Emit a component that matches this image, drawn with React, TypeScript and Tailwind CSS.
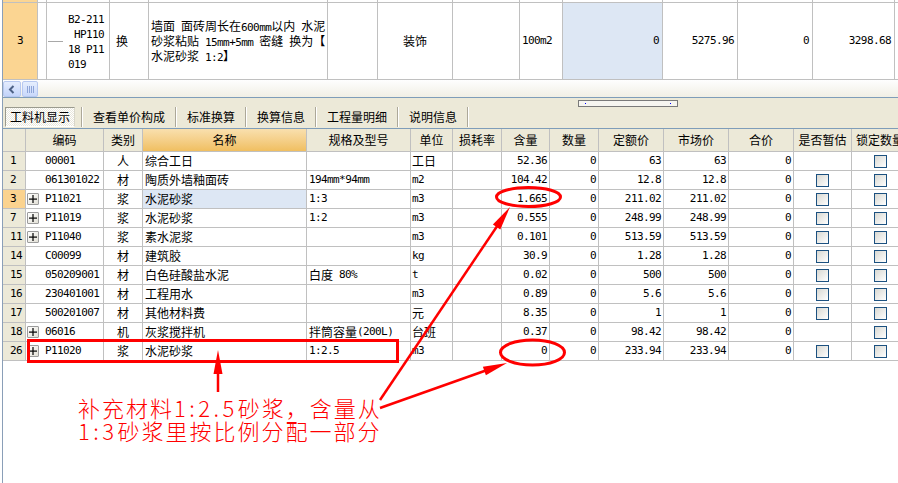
import React from "react";

const CJK = /([\u2E80-\u9FFF\u3000-\u303F\uFF00-\uFFEF]+)/;

function T({ s, big }: { s: string; big?: boolean }) {
  const parts = s.split(CJK).filter((p) => p !== "");
  return (
    <>
      {parts.map((p, i) =>
        CJK.test(p) ? (
          <span
            key={i}
            className={
              big
                ? "font-['Noto_Sans_CJK_SC',sans-serif] text-[22px] tracking-[2px] font-light"
                : "font-['Noto_Sans_CJK_SC',sans-serif] text-[12px]"
            }
          >
            {p}
          </span>
        ) : (
          <span
            key={i}
            className={
              big
                ? "font-['Noto_Sans_CJK_SC',sans-serif] text-[22px] tracking-[3.5px] font-light"
                : "font-['DejaVu_Sans_Mono',monospace] text-[11px] tracking-[-0.6px]"
            }
          >
            {p}
          </span>
        )
      )}
    </>
  );
}

const W = [
  "w-[23px]",
  "w-[78px]",
  "w-[39px]",
  "w-[164px]",
  "w-[104px]",
  "w-[42px]",
  "w-[49px]",
  "w-[48px]",
  "w-[49px]",
  "w-[65px]",
  "w-[65px]",
  "w-[65px]",
  "w-[58px]",
  "w-[57px]",
];

const HEAD = ["", "编码", "类别", "名称", "规格及型号", "单位", "损耗率", "含量", "数量", "定额价", "市场价", "合价", "是否暂估", "锁定数量"];

type R = {
  n: string;
  plus?: boolean;
  code: string;
  cat: string;
  name: string;
  spec: string;
  unit: string;
  qty: string;
  dp: string;
  est: boolean;
  sel?: boolean;
};

const ROWS: R[] = [
  { n: "1", code: "00001", cat: "人", name: "综合工日", spec: "", unit: "工日", qty: "52.36", dp: "63", est: false },
  { n: "2", code: "061301022", cat: "材", name: "陶质外墙釉面砖", spec: "194mm*94mm", unit: "m2", qty: "104.42", dp: "12.8", est: true },
  { n: "3", plus: true, code: "P11021", cat: "浆", name: "水泥砂浆", spec: "1:3", unit: "m3", qty: "1.665", dp: "211.02", est: true, sel: true },
  { n: "7", plus: true, code: "P11019", cat: "浆", name: "水泥砂浆", spec: "1:2", unit: "m3", qty: "0.555", dp: "248.99", est: true },
  { n: "11", plus: true, code: "P11040", cat: "浆", name: "素水泥浆", spec: "", unit: "m3", qty: "0.101", dp: "513.59", est: true },
  { n: "14", code: "C00099", cat: "材", name: "建筑胶", spec: "", unit: "kg", qty: "30.9", dp: "1.28", est: true },
  { n: "15", code: "050209001", cat: "材", name: "白色硅酸盐水泥", spec: "白度 80%", unit: "t", qty: "0.02", dp: "500", est: true },
  { n: "16", code: "230401001", cat: "材", name: "工程用水", spec: "", unit: "m3", qty: "0.89", dp: "5.6", est: true },
  { n: "17", code: "500201007", cat: "材", name: "其他材料费", spec: "", unit: "元", qty: "8.35", dp: "1", est: true },
  { n: "18", plus: true, code: "06016", cat: "机", name: "灰浆搅拌机", spec: "拌筒容量(200L)", unit: "台班", qty: "0.37", dp: "98.42", est: false },
  { n: "26", plus: true, code: "P11020", cat: "浆", name: "水泥砂浆", spec: "1:2.5", unit: "m3", qty: "0", dp: "233.94", est: true },
];

const cell = "shrink-0 h-full border-r border-[#c0c0c0] flex items-center overflow-hidden whitespace-pre";

function Check() {
  return <div className="w-[13px] h-[13px] border border-[#1c5180] bg-gradient-to-br from-[#d8d8d2] to-white" />;
}

function Plus() {
  return (
    <div className="ml-[1px] w-[12px] h-[12px] border border-[#9c9c9c] rounded-[1px] bg-gradient-to-br from-white to-[#e2e0d6] flex items-center justify-center">
      <svg width="8" height="8" viewBox="0 0 8 8">
        <rect x="0" y="3.5" width="8" height="1.2" fill="#000" />
        <rect x="3.4" y="0" width="1.2" height="8" fill="#000" />
      </svg>
    </div>
  );
}

function Row({ r }: { r: R }) {
  return (
    <div className="flex h-[19px] border-b border-[#c0c0c0] text-black">
      <div className={`${W[0]} ${cell} pl-[7px] ${r.sel ? "bg-[#fbd38f]" : "bg-[#ece9d8]"}`}>
        <T s={r.n} />
      </div>
      <div className={`${W[1]} ${cell}`}>
        <div className="w-[19px] shrink-0 flex items-center">{r.plus ? <Plus /> : null}</div>
        <T s={r.code} />
      </div>
      <div className={`${W[2]} ${cell} justify-center`}>
        <T s={r.cat} />
      </div>
      <div className={`${W[3]} ${cell} pl-[2px] ${r.sel ? "bg-[#dde7f4]" : ""}`}>
        <T s={r.name} />
      </div>
      <div className={`${W[4]} ${cell} pl-[2px]`}>
        <T s={r.spec} />
      </div>
      <div className={`${W[5]} ${cell} pl-[1px]`}>
        <T s={r.unit} />
      </div>
      <div className={`${W[6]} ${cell}`} />
      <div className={`${W[7]} ${cell} justify-end pr-[2px]`}>
        <T s={r.qty} />
      </div>
      <div className={`${W[8]} ${cell} justify-end pr-[2px]`}>
        <T s="0" />
      </div>
      <div className={`${W[9]} ${cell} justify-end pr-[2px]`}>
        <T s={r.dp} />
      </div>
      <div className={`${W[10]} ${cell} justify-end pr-[2px]`}>
        <T s={r.dp} />
      </div>
      <div className={`${W[11]} ${cell} justify-end pr-[2px]`}>
        <T s="0" />
      </div>
      <div className={`${W[12]} ${cell} justify-center`}>{r.est ? <Check /> : null}</div>
      <div className={`${W[13]} ${cell} justify-center`}>
        <Check />
      </div>
    </div>
  );
}

const TW = [
  "w-[35px]",
  "w-[9px]",
  "w-[63px]",
  "w-[39px]",
  "w-[179px]",
  "w-[50px]",
  "w-[75px]",
  "w-[67px]",
  "w-[43px]",
  "w-[100px]",
  "w-[75px]",
  "w-[75px]",
  "w-[82px]",
];

function arrowHead(sx: number, sy: number, tx: number, ty: number, len = 24, hw = 4.5) {
  const dx = tx - sx;
  const dy = ty - sy;
  const l = Math.sqrt(dx * dx + dy * dy);
  const ux = dx / l;
  const uy = dy / l;
  const bx = tx - len * ux;
  const by = ty - len * uy;
  const nx = -uy;
  const ny = ux;
  return `${tx},${ty} ${bx + hw * nx},${by + hw * ny} ${bx - hw * nx},${by - hw * ny}`;
}

function Arrow({ sx, sy, tx, ty }: { sx: number; sy: number; tx: number; ty: number }) {
  const dx = tx - sx;
  const dy = ty - sy;
  const l = Math.sqrt(dx * dx + dy * dy);
  const ex = tx - (dx / l) * 12;
  const ey = ty - (dy / l) * 12;
  return (
    <g>
      <line x1={sx} y1={sy} x2={ex} y2={ey} stroke="#ff0000" strokeWidth="2.5" />
      <polygon points={arrowHead(sx, sy, tx, ty)} fill="#ff0000" />
    </g>
  );
}

export default function App() {
  return (
    <div className="relative w-[898px] h-[483px] overflow-hidden bg-white">
      <div className="ml-[2px] min-h-[483px] border-l border-[#8a9fb8] bg-white">
        {/* previous row tail */}
        <div className="flex h-[2px]">
          {TW.map((w, i) => (
            <div key={i} className={`${w} shrink-0 h-full border-r border-[#c0c0c0] ${i === 0 ? "bg-[#fbd592]" : "bg-white"}`} />
          ))}
        </div>
        {/* top row */}
        <div className="flex h-[78px] border-t border-b border-[#c0c0c0] text-black">
          <div className={`${TW[0]} ${cell} justify-center bg-[#fbd592]`}>
            <T s="3" />
          </div>
          <div className={`${TW[1]} ${cell}`} />
          <div className={`${TW[2]} ${cell}`}>
            <div className="w-[15px] h-px bg-[#a8a8a8] ml-[1px] shrink-0" />
            <div className="ml-[5px] leading-[13px] flex flex-col">
              <div>
                <T s="B2-211" />
              </div>
              <div>
                <T s=" HP110" />
              </div>
              <div>
                <T s="18 P11" />
              </div>
              <div>
                <T s="019" />
              </div>
            </div>
          </div>
          <div className={`${TW[3]} ${cell} pl-[6px]`}>
            <T s="换" />
          </div>
          <div className={`${TW[4]} ${cell} pl-[2px]`}>
            <div className="leading-[13px] flex flex-col">
              <div>
                <T s="墙面 面砖周长在600mm以内 水泥" />
              </div>
              <div>
                <T s="砂浆粘贴 15mm+5mm 密缝 换为【" />
              </div>
              <div>
                <T s="水泥砂浆 1:2】" />
              </div>
            </div>
          </div>
          <div className={`${TW[5]} ${cell}`} />
          <div className={`${TW[6]} ${cell} justify-center`}>
            <T s="装饰" />
          </div>
          <div className={`${TW[7]} ${cell}`} />
          <div className={`${TW[8]} ${cell} pl-[2px]`}>
            <T s="100m2" />
          </div>
          <div className={`${TW[9]} ${cell} justify-end pr-[3px] bg-[#dde7f4]`}>
            <T s="0" />
          </div>
          <div className={`${TW[10]} ${cell} justify-end pr-[3px]`}>
            <T s="5275.96" />
          </div>
          <div className={`${TW[11]} ${cell} justify-end pr-[3px]`}>
            <T s="0" />
          </div>
          <div className={`${TW[12]} ${cell} justify-end pr-[3px]`}>
            <T s="3298.68" />
          </div>
        </div>
        {/* horizontal scrollbar */}
        <div className="h-[18px] border-b border-[#7f9db9] bg-gradient-to-b from-[#fefefe] to-[#f1efe5] flex items-start pt-[1px]">
          <div className="w-[18px] h-[16px] rounded-[2px] border border-[#b7c8f0] bg-gradient-to-b from-[#e4ecfd] to-[#c3d4fa] flex items-center justify-center">
            <svg width="8" height="9" viewBox="0 0 8 9">
              <path d="M5.5 1 L2 4.5 L5.5 8" stroke="#4d6185" strokeWidth="2" fill="none" />
            </svg>
          </div>
          <div className="ml-[1px] w-[16px] h-[16px] rounded-[2px] border border-[#b7c8f0] bg-gradient-to-b from-[#e6eefd] to-[#c9d8fb] flex items-center justify-center gap-[1px]">
            <div className="w-px h-[7px] bg-[#8ea5d8]" />
            <div className="w-px h-[7px] bg-[#8ea5d8]" />
            <div className="w-px h-[7px] bg-[#8ea5d8]" />
            <div className="w-px h-[7px] bg-[#8ea5d8]" />
          </div>
        </div>
        {/* toolbar */}
        <div className="h-[30px] bg-[#ece9d8] flex flex-col">
          <div className="ml-[575px] mt-[2px] w-[100px] h-[7px] border border-[#7a7a7a] bg-[#f6f5f0] flex items-center justify-between px-[6px]">
            <div className="w-px h-px bg-[#0000ff]" />
            <div className="w-px h-px bg-[#0000ff]" />
          </div>
          <div className="flex h-[20px] pl-[2px] text-black">
            <div className="w-[70px] flex items-center justify-center border border-t-[#9a9a8e] border-l-[#9a9a8e] border-r-[#d8d6ca] border-b-white bg-[repeating-conic-gradient(#ffffff_0_25%,#e9e7dc_0_50%)] bg-[length:2px_2px]">
              <T s="工料机显示" />
            </div>
            <div className="ml-[6px] w-[2px] border-l border-[#aca899] bg-white" />
            <div className="px-[10px] flex items-center">
              <T s="查看单价构成" />
            </div>
            <div className="w-[2px] border-l border-[#aca899] bg-white" />
            <div className="px-[10px] flex items-center">
              <T s="标准换算" />
            </div>
            <div className="w-[2px] border-l border-[#aca899] bg-white" />
            <div className="px-[10px] flex items-center">
              <T s="换算信息" />
            </div>
            <div className="w-[2px] border-l border-[#aca899] bg-white" />
            <div className="px-[10px] flex items-center">
              <T s="工程量明细" />
            </div>
            <div className="w-[2px] border-l border-[#aca899] bg-white" />
            <div className="px-[10px] flex items-center">
              <T s="说明信息" />
            </div>
            <div className="w-[2px] border-l border-[#aca899] bg-white" />
          </div>
        </div>
        {/* table */}
        <div className="border-t border-[#7f9db9]">
          <div className="flex h-[23px] border-b border-[#c0c0c0] bg-[#ece9d8] text-black">
            {HEAD.map((h, i) => (
              <div
                key={i}
                className={`${W[i]} ${cell} justify-center ${
                  i === 3 ? "bg-gradient-to-b from-[#f9e0ae] to-[#f0bf60]" : ""
                }`}
              >
                <T s={h} />
              </div>
            ))}
          </div>
          {ROWS.map((r, i) => (
            <Row key={i} r={r} />
          ))}
        </div>
        {/* annotation */}
        <div className="pt-[35px] pl-[75px] leading-[23px] text-[#ff0000]">
          <div className="h-[23px] flex items-center whitespace-pre">
            <T big s="补充材料1:2.5砂浆，含量从" />
          </div>
          <div className="h-[23px] flex items-center whitespace-pre">
            <T big s="1:3砂浆里按比例分配一部分" />
          </div>
        </div>
      </div>
      {/* red markup overlay */}
      <svg className="absolute left-0 top-0 pointer-events-none" width="898" height="483" viewBox="0 0 898 483">
        <rect x="28.5" y="340.5" width="369" height="21" fill="none" stroke="#ff0000" strokeWidth="3" />
        <ellipse cx="528.5" cy="197" rx="32" ry="9.5" fill="none" stroke="#ff0000" strokeWidth="3" />
        <ellipse cx="532.5" cy="352.5" rx="32" ry="12.5" fill="none" stroke="#ff0000" strokeWidth="3" />
        <Arrow sx={380} sy={400} tx={510} ty={207} />
        <Arrow sx={380} sy={408} tx={507} ty={363} />
        <Arrow sx={218} sy={392} tx={218} ty={350} />
      </svg>
    </div>
  );
}
